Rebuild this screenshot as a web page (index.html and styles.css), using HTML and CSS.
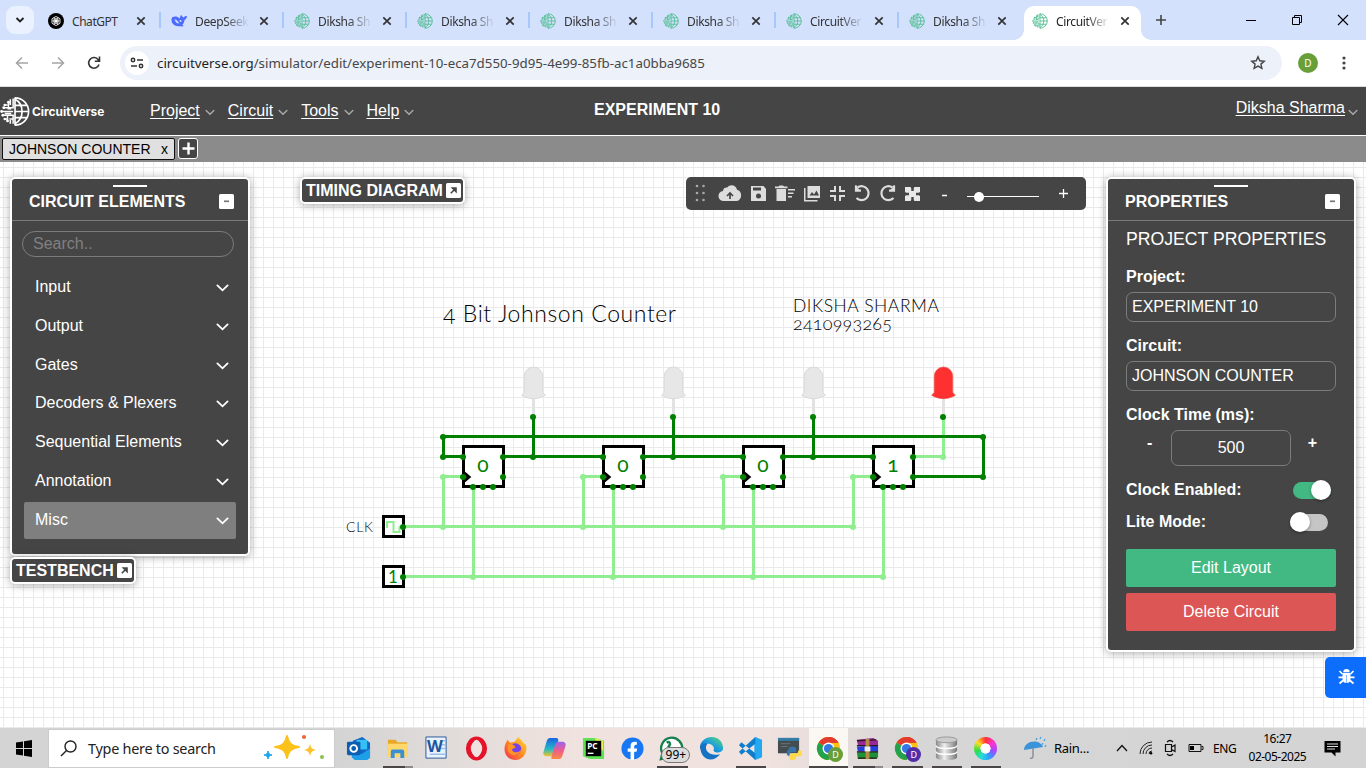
FILE: index.html
```html
<!DOCTYPE html>
<html lang="en">
<head>
<meta charset="utf-8">
<title>CircuitVerse</title>
<link rel="stylesheet" href="styles.css">
</head>
<body>
<svg class="defs" width="0" height="0">
  <defs>
    <symbol id="globe" viewBox="0 0 32 32">
      <g fill="none" stroke="currentColor" stroke-width="1.8">
        <path d="M16 1.5A14.5 14.5 0 0 1 16 30.500M16 1v30M16 3c10 5 10 21 0 26M16 9.500h13M16 16h15M16 22.500h13"/>
        <path d="M14 2v10H9V6M14 16H1.500M14 29v-9H8v6M14 24h-4M4 12h6M3 20h5M5 9h3M5 24h3M11 3v6M11 29v-4M12 13H8M12 18H5" stroke-width="1.600"/>
      </g>
      <g fill="currentColor"><circle cx="1.700" cy="16" r="1.500"/><circle cx="4" cy="12" r="1.500"/><circle cx="3" cy="20" r="1.500"/><circle cx="9" cy="6" r="1.500"/><circle cx="8" cy="26" r="1.500"/><circle cx="5" cy="9" r="1.300"/><circle cx="5" cy="24" r="1.300"/></g>
    </symbol>
    <symbol id="close" viewBox="0 0 10 10"><path d="M1.300 1.300l7.400 7.400M8.700 1.300L1.300 8.700" stroke="currentColor" stroke-width="1.700"/></symbol>
    <symbol id="chev" viewBox="0 0 14 10"><path d="M1.500 2.200L7 7.500l5.500-5.300" fill="none" stroke="currentColor" stroke-width="2" stroke-linecap="round"/></symbol>
    <symbol id="minus" viewBox="0 0 15 15"><rect width="15" height="15" rx="1.500" fill="#fff"/><path d="M5 7.300h5" stroke="#777" stroke-width="1.700"/></symbol>
    <symbol id="expand" viewBox="0 0 15 15"><rect width="15" height="15" rx="1.500" fill="#fff"/><path d="M4.800 10.200l3.500-3.500M6.500 5H10v3.500z" fill="#454545" stroke="#454545" stroke-width="1.600"/></symbol>
    <symbol id="led" viewBox="0 0 26 34"><path d="M3.800 26.500V10.200a9.200 9.200 0 0 1 18.400 0V26.500l2.700 2.700C18 33.800 8 33.800 1.100 29.200z"/></symbol>
    <symbol id="ff" viewBox="0 0 50 50">
      <rect x="4.500" y="4.500" width="40" height="40" fill="#fff" stroke="#000" stroke-width="3"/>
      <path d="M4 30l6 5-6 5" fill="none" stroke="#000" stroke-width="3"/>
      <g fill="green"><circle cx="4" cy="15" r="3"/><circle cx="4" cy="35" r="3"/><circle cx="44" cy="15" r="3"/><circle cx="44" cy="35" r="3"/><circle cx="14" cy="45" r="3"/><circle cx="24" cy="45" r="3"/><circle cx="34" cy="45" r="3"/></g>
    </symbol>
    <symbol id="chrome" viewBox="0 0 26 26">
      <circle cx="13" cy="13" r="12" fill="#fbc116"/>
      <path d="M13 13L2.600 7A12 12 0 0 1 23.400 7z" fill="#e33b2e"/>
      <path d="M13 13L2.600 7A12 12 0 0 0 13 25l5-9z" fill="#22a24c"/>
      <path d="M13 7h10.400L18 14z" fill="#fbc116"/><path d="M13 1a12 12 0 0 1 10.400 6H13z" fill="#e33b2e"/>
      <circle cx="13" cy="13" r="6.200" fill="#fff"/><circle cx="13" cy="13" r="4.800" fill="#3478e5"/>
    </symbol>
    <pattern id="grid" x="3" y="5" width="10" height="10" patternUnits="userSpaceOnUse"><path d="M.5 0V10M0 .5H10" stroke="#eaeaea"/></pattern>
    <linearGradient id="edgeG" x1="0" y1="1" x2="1" y2="0"><stop offset="0" stop-color="#0c59a4"/><stop offset=".5" stop-color="#1b9de2"/><stop offset="1" stop-color="#5fdc6a"/></linearGradient>
    <linearGradient id="cop1" x1="0" y1="0" x2="0" y2="1"><stop offset="0" stop-color="#1b62e0"/><stop offset=".6" stop-color="#22b8c8"/><stop offset="1" stop-color="#f0c62a"/></linearGradient>
    <linearGradient id="cop2" x1="0" y1="0" x2="0" y2="1"><stop offset="0" stop-color="#9a63ee"/><stop offset=".5" stop-color="#ef5b8d"/><stop offset="1" stop-color="#f98b45"/></linearGradient>
    <linearGradient id="fox" x1="1" y1="0" x2="0" y2="1"><stop offset="0" stop-color="#ffe03a"/><stop offset=".5" stop-color="#ff8a1f"/><stop offset="1" stop-color="#f02a5b"/></linearGradient>
    <linearGradient id="metal"><stop offset="0" stop-color="#888"/><stop offset=".4" stop-color="#eee"/><stop offset="1" stop-color="#777"/></linearGradient>
  </defs>
</svg>

<div class="tabstrip">
  <button class="tabsearch"><svg width="10" height="8" viewBox="0 0 10 8"><path d="M1.500 2L5 5.500 8.500 2" fill="none" stroke="#222" stroke-width="1.900"/></svg></button>
  <div class="btabs">
    <div class="btab"><svg class="fav" viewBox="0 0 16 16"><circle cx="8" cy="8" r="8" fill="#000"/><g fill="none" stroke="#fff" stroke-width=".8"><ellipse cx="8" cy="5.800" rx="2" ry="2.300"/><ellipse cx="8" cy="5.800" rx="2" ry="2.300" transform="rotate(60 8 8)"/><ellipse cx="8" cy="5.800" rx="2" ry="2.300" transform="rotate(120 8 8)"/><ellipse cx="8" cy="5.800" rx="2" ry="2.300" transform="rotate(180 8 8)"/><ellipse cx="8" cy="5.800" rx="2" ry="2.300" transform="rotate(240 8 8)"/><ellipse cx="8" cy="5.800" rx="2" ry="2.300" transform="rotate(300 8 8)"/></g></svg><span class="tt plain">ChatGPT</span><svg class="x"><use href="#close"/></svg></div>
    <div class="btab"><svg class="fav" viewBox="0 0 16 16"><path d="M.5 6C1 3.500 4 3 6.500 4L9 5.500C9 3.500 9.500 2 10.500 2c.3 1.300 1 2.200 2.200 2.400C13.500 3.500 14.500 3 16 3c-.2 2-1 3.300-2.400 3.800-.2 2.200-1.100 3.800-2.300 5l1.500 1.300c-1.500.8-2.700.5-3.800-.1C4.500 14 0 11 .5 6z" fill="#4d6bfe"/><path d="M3.500 6.500c2-.3 3.500 2 4.700 4-1.800.3-3.700-1-4.700-4z" fill="#d3e1fd"/><circle cx="9.500" cy="8" r="1" fill="#d3e1fd"/></svg><span class="tt">DeepSeek</span><svg class="x"><use href="#close"/></svg></div>
    <div class="btab"><svg class="fav cv"><use href="#globe"/></svg><span class="tt">Diksha Sh</span><svg class="x"><use href="#close"/></svg></div>
    <div class="btab"><svg class="fav cv"><use href="#globe"/></svg><span class="tt">Diksha Sh</span><svg class="x"><use href="#close"/></svg></div>
    <div class="btab"><svg class="fav cv"><use href="#globe"/></svg><span class="tt">Diksha Sh</span><svg class="x"><use href="#close"/></svg></div>
    <div class="btab"><svg class="fav cv"><use href="#globe"/></svg><span class="tt">Diksha Sh</span><svg class="x"><use href="#close"/></svg></div>
    <div class="btab"><svg class="fav cv"><use href="#globe"/></svg><span class="tt">CircuitVer</span><svg class="x"><use href="#close"/></svg></div>
    <div class="btab last"><svg class="fav cv"><use href="#globe"/></svg><span class="tt">Diksha Sh</span><svg class="x"><use href="#close"/></svg></div>
    <div class="btab active"><svg class="fav cv"><use href="#globe"/></svg><span class="tt">CircuitVer</span><svg class="x"><use href="#close"/></svg></div>
  </div>
  <svg class="newtab" width="12" height="12"><path d="M6 1v10M1 6h10" stroke="#444" stroke-width="1.600"/></svg>
  <div class="winctl">
    <svg width="12" height="12"><path d="M1 6.500h10" stroke="#000"/></svg>
    <svg width="12" height="12"><path d="M1.500 3.500h7v7h-7zM3.500 3V1.500h7v7H9" fill="none" stroke="#000"/></svg>
    <svg width="12" height="12"><path d="M1 1l10 10M11 1L1 11" stroke="#000" stroke-width="1.100"/></svg>
  </div>
</div>

<div class="addrbar">
  <div class="navbtns">
    <svg width="14" height="14"><path d="M13 7H2M7 1.500L1.500 7 7 12.500" fill="none" stroke="#a5a5a5" stroke-width="1.500"/></svg>
    <svg width="14" height="14"><path d="M1 7h11M7 1.500L12.500 7 7 12.500" fill="none" stroke="#a5a5a5" stroke-width="1.500"/></svg>
    <svg width="14" height="14"><path d="M12 8.500A5.300 5.300 0 1 1 10.800 3.200L12.300 5M12.500 .5V5.200H7.800" fill="none" stroke="#333" stroke-width="1.600"/></svg>
  </div>
  <div class="omni">
    <span class="site"><svg width="14" height="12" viewBox="0 0 14 12"><g fill="none" stroke="#333" stroke-width="1.500"><circle cx="3" cy="3" r="1.700"/><path d="M7 3h6M1 9h6"/><circle cx="11" cy="9" r="1.700"/></g></svg></span>
    <span class="url"><b>circuitverse.org</b>/simulator/edit/experiment-10-eca7d550-9d95-4e99-85fb-ac1a0bba9685</span>
    <svg class="star" width="16" height="16" viewBox="0 0 16 16"><path d="M8 1.800l1.800 4 4.400.4-3.300 2.900 1 4.300L8 11.100l-3.900 2.300 1-4.300L1.800 6.200l4.400-.4z" fill="none" stroke="#444" stroke-width="1.400"/></svg>
  </div>
  <span class="avatar">D</span>
  <svg class="dots" width="4" height="16"><g fill="#444"><circle cx="2" cy="3" r="1.600"/><circle cx="2" cy="8" r="1.600"/><circle cx="2" cy="13" r="1.600"/></g></svg>
</div>

<header class="cvhead">
  <svg class="logo"><use href="#globe"/></svg><span class="brand">CircuitVerse</span>
  <nav>
    <a>Project</a><svg class="nc"><use href="#chev"/></svg>
    <a>Circuit</a><svg class="nc"><use href="#chev"/></svg>
    <a>Tools</a><svg class="nc"><use href="#chev"/></svg>
    <a>Help</a><svg class="nc"><use href="#chev"/></svg>
  </nav>
  <span class="ptitle">EXPERIMENT 10</span>
  <div class="user"><a>Diksha Sharma</a><svg class="nc"><use href="#chev"/></svg></div>
</header>
<div class="ctabs"><div class="ctab"><span>JOHNSON COUNTER</span><span>x</span></div><div class="cadd"><svg width="13" height="13"><path d="M6.500 .5v12M.5 6.500h12" stroke="#fff" stroke-width="2.400"/></svg></div></div>

<main class="stage">
  <svg class="board" width="1366" height="566" viewBox="0 162 1366 566">
    <g transform="translate(0 162)"><rect width="1366" height="566" fill="url(#grid)"/></g>
    <g class="label"><text x="443" y="322" font-size="23" textLength="233">4 Bit Johnson Counter</text>
    <text x="793" y="312" font-size="17.500" textLength="146">DIKSHA SHARMA</text>
    <text x="793" y="330" font-size="18" textLength="99">2410993265</text>
    <text x="346" y="532" font-size="14" textLength="27">CLK</text></g>
    <g stroke="#e2e2e4" stroke-width="3"><path d="M533.500 398v18M673.500 398v18M813.500 398v18M943.500 398v18"/></g>
    <g fill="#e7e7e7" stroke="#d9d9dc"><use href="#led" x="520.500" y="366" width="26" height="34"/><use href="#led" x="660.500" y="366" width="26" height="34"/><use href="#led" x="800.500" y="366" width="26" height="34"/></g>
    <use href="#led" x="930.500" y="366" width="26" height="34" fill="#ff3030" stroke="#f04848" stroke-width=".6"/>
    <g fill="none" stroke="lightgreen" stroke-width="3">
      <path d="M403 526.500H853.500V476.500H873M443.500 526.500V476.500H463M583.500 526.500V476.500H603M723.500 526.500V476.500H743M403 576.500H883.500V487M473.500 487V576.500M613.500 487V576.500M753.500 487V576.500M913 456.500H943.500V417"/>
    </g>
    <g fill="lightgreen"><circle cx="443" cy="477" r="3"/><circle cx="583" cy="477" r="3"/><circle cx="723" cy="477" r="3"/><circle cx="853" cy="477" r="3"/><circle cx="443" cy="527" r="3"/><circle cx="583" cy="527" r="3"/><circle cx="723" cy="527" r="3"/><circle cx="853" cy="527" r="3"/><circle cx="473" cy="577" r="3"/><circle cx="613" cy="577" r="3"/><circle cx="753" cy="577" r="3"/><circle cx="883" cy="577" r="3"/><circle cx="943" cy="457" r="3"/></g>
    <path d="M463 456.500H443.500V436.500H983.500V476.500H913M503 456.500H603M643 456.500H743M783 456.500H873M533.500 456V417M673.500 456V417M813.500 456V417" fill="none" stroke="green" stroke-width="3"/>
    <g fill="green"><circle cx="443" cy="437" r="3"/><circle cx="443" cy="457" r="3"/><circle cx="983" cy="437" r="3"/><circle cx="983" cy="477" r="3"/><circle cx="533" cy="417" r="3"/><circle cx="673" cy="417" r="3"/><circle cx="813" cy="417" r="3"/><circle cx="943" cy="417" r="3"/><circle cx="533" cy="457" r="3"/><circle cx="673" cy="457" r="3"/><circle cx="813" cy="457" r="3"/></g>
    <use href="#ff" x="459" y="442" width="50" height="50"/><use href="#ff" x="599" y="442" width="50" height="50"/><use href="#ff" x="739" y="442" width="50" height="50"/><use href="#ff" x="869" y="442" width="50" height="50"/>
    <g fill="#fff" stroke="#000" stroke-width="3"><rect x="383.500" y="516.500" width="20" height="20"/><rect x="383.500" y="566.500" width="20" height="20"/></g>
    <path d="M387 528v-6h6.500v10h6v-6" fill="none" stroke="lightgreen" stroke-width="2"/>
    <g fill="green"><circle cx="403" cy="527" r="3"/><circle cx="403" cy="577" r="3"/></g>
    <g class="val"><text x="483" y="472">0</text><text x="623" y="472">0</text><text x="763" y="472">0</text><text x="893" y="472">1</text><text x="393" y="582.500" class="lit">1</text></g>
  </svg>

  <section class="panel elements">
    <div class="grip"></div>
    <div class="phead"><span>CIRCUIT ELEMENTS</span><svg width="15" height="15"><use href="#minus"/></svg></div>
    <div class="search">Search..</div>
    <ul class="menu">
      <li>Input<svg><use href="#chev"/></svg></li>
      <li>Output<svg><use href="#chev"/></svg></li>
      <li>Gates<svg><use href="#chev"/></svg></li>
      <li>Decoders &amp; Plexers<svg><use href="#chev"/></svg></li>
      <li>Sequential Elements<svg><use href="#chev"/></svg></li>
      <li>Annotation<svg><use href="#chev"/></svg></li>
      <li class="hover">Misc<svg><use href="#chev"/></svg></li>
    </ul>
  </section>
  <div class="panel mini timing">TIMING DIAGRAM<svg width="15" height="15"><use href="#expand"/></svg></div>
  <div class="panel mini bench">TESTBENCH<svg width="15" height="15"><use href="#expand"/></svg></div>

  <div class="tools">
    <svg width="400" height="33" viewBox="0 0 400 33">
      <g fill="#a9a9a9"><circle cx="11" cy="9" r="1.300"/><circle cx="17.500" cy="9" r="1.300"/><circle cx="11" cy="16" r="1.300"/><circle cx="17.500" cy="16" r="1.300"/><circle cx="11" cy="23" r="1.300"/><circle cx="17.500" cy="23" r="1.300"/></g>
      <g fill="#ddd">
        <path d="M38 24a5 5 0 0 1-1-10c0-3 3-4 4.200-3.500 3-3.800 9-2.500 9.800 2.300 5.500 1 5.500 10 .2 11.200z"/>
        <path d="M66.500 9h11l2.500 3V24H65V9z"/>
        <path d="M90.500 12h9.500v12h-9.500zM89 9.500h3.500l1-1h3.500l1 1h3.500v1.700H89zM102 12h7v1.500h-7zM102 15.500h5.500V17H102zM102 19h4v1.500h-4z"/>
        <path d="M121.500 9H134v12h-12.500zM119.500 11v12h12v1.500H118V11z"/>
      </g>
      <path d="M44 22v-5.500M41 19l3-3 3 3" fill="none" stroke="#454545" stroke-width="1.700"/>
      <path d="M67 10.500h8v3h-8z" fill="#454545"/><circle cx="72.500" cy="19" r="2.500" fill="#454545"/>
      <path d="M123.500 18.500l2.500-3.500 2 2.500 2.500-4 2.500 5z" fill="#454545"/>
      <path d="M144 14h5V9M159 14h-5V9M144 19h5v5M159 19h-5v5" fill="none" stroke="#ddd" stroke-width="2"/>
      <g fill="none" stroke="#ddd" stroke-width="2.200"><path d="M171.500 10.500A7 7 0 1 1 170.500 21M170 8.500v5h5"/><path d="M206.500 10.500A7 7 0 1 0 207.500 21M208 8.500v5h-5"/></g><path d="M169 8v6.500h6zM209 8v6.500h-6z" fill="#ddd"/>
      <path d="M219 10h15v14h-15z" fill="#e8e8e8"/><path d="M224.500 10h4l-2 2.500zM224.500 24h4l-2-2.500zM219 15v4l2.500-2zM234 15v4l-2.500-2zM222.500 12.500l3 3M230.500 12.500l-3 3M222.500 21.500l3-3M230.500 21.500l-3-3" fill="#454545"/><path d="M226.500 10v4M226.500 20v4M219 17h4M230 17h4" stroke="#454545" stroke-width="2.400"/>
      <path d="M256 18.500h5M373 16.500h9M377.500 12v9" stroke="#fff" stroke-width="1.300"/>
      <path d="M281 19.500h72" stroke="#fff"/><circle cx="293" cy="20" r="5" fill="#fff"/>
    </svg>
  </div>

  <section class="panel props">
    <div class="grip"></div>
    <div class="phead"><span>PROPERTIES</span><svg width="15" height="15"><use href="#minus"/></svg></div>
    <div class="pbody">
      <h2>PROJECT PROPERTIES</h2>
      <label>Project:</label><div class="inp">EXPERIMENT 10</div>
      <label>Circuit:</label><div class="inp">JOHNSON COUNTER</div>
      <label class="ck">Clock Time (ms):</label>
      <div class="clock"><b>-</b><div class="num">500</div><b>+</b></div>
      <div class="row r1"><b>Clock Enabled:</b><span class="sw on"></span></div>
      <div class="row r2"><b>Lite Mode:</b><span class="sw"></span></div>
      <div class="btn green">Edit Layout</div>
      <div class="btn red">Delete Circuit</div>
    </div>
  </section>
  <div class="bug"><svg width="17" height="17" viewBox="0 0 17 17"><path d="M5.300 4.200a3.200 3.200 0 0 1 6.400 0z" fill="#fff"/><path d="M4.500 5h8v6a4 4 0 0 1-8 0z" fill="#fff"/><path d="M1.500 3l3 3M15.500 3l-3 3M.5 9.300h16M1.500 15.500l3.500-3M15.500 15.500l-3.500-3" stroke="#fff" stroke-width="1.700"/><path d="M8.500 7v8" stroke="#8ab9ff"/></svg></div>
</main>

<footer class="taskbar">
  <div class="start"><svg width="16" height="17"><path d="M0 2.500L7 1.500V8H0zM8 1.300L16 0v8H8zM0 9h7v6.500L0 14.500zM8 9h8v8l-8-1.300z"/></svg></div>
  <div class="tsearch"><svg width="17" height="17"><circle cx="10.500" cy="6.500" r="5.500" fill="none" stroke="#222" stroke-width="1.400"/><path d="M6.500 10.500L1 16" stroke="#222" stroke-width="1.400"/></svg><span>Type here to search</span>
    <svg class="spark" width="62" height="28" viewBox="0 0 62 28"><path d="M24 2c1.500 7 4 9.500 12 11-8 1.500-10.500 4-12 11-1.500-7-4-9.500-12-11 8-1.500 10.500-4 12-11z" fill="#fcc21b" stroke="#fcc21b" stroke-width="1.800" stroke-linejoin="round"/><path d="M47 10c1 4 2 5 6 6-4 1-5 2-6 6-1-4-2-5-6-6 4-1 5-2 6-6z" fill="#fbc22d"/><path d="M5 17c.7 2.800 1.200 3.300 4 4-2.800.7-3.300 1.200-4 4-.7-2.800-1.200-3.300-4-4 2.800-.7 3.300-1.200 4-4z" fill="#16a3f0" stroke="#16a3f0"/><circle cx="41" cy="3" r="2" fill="#ef6330"/><circle cx="59" cy="23" r="2" fill="#8bc34a"/></svg></div>
  <div class="apps">
    <div><svg viewBox="0 0 26 26"><path d="M7 5L17 1l8 6v16H7z" fill="#1267c4"/><path d="M11 4h11v10H11z" fill="#34c0f4"/><path d="M6 14l10 5 9-6v10l-3 2H9l-3-3z" fill="#1d9ee8"/><rect x="1" y="6" width="14" height="14" rx="1.500" fill="#0a5fb4"/><circle cx="8" cy="13" r="3.500" fill="none" stroke="#fff" stroke-width="2"/></svg></div>
    <div class="run split"><svg viewBox="0 0 26 26"><path d="M3 4h8l2 2.500h10V21H3z" fill="#e8a727"/><path d="M3 8h20v14H3z" fill="#ffd76b"/><path d="M6 23v-7q0-2 2-2h10q2 0 2 2v7h-4v-5h-6v5z" fill="#3b90d4"/></svg></div>
    <div><svg viewBox="0 0 26 26"><path d="M2 1h21v22H2z" fill="#e9f2fb" stroke="#2a579a"/><path d="M17 5h5M17 9h5M15 13h7M6 19h16" stroke="#9fc0e4" stroke-width="1.500"/><text x="3" y="17" font-size="17" font-weight="700" fill="#1d55a0">W</text></svg></div>
    <div><svg viewBox="0 0 26 26"><ellipse cx="13" cy="13" rx="8.500" ry="10" fill="none" stroke="#e5122a" stroke-width="5"/><ellipse cx="13" cy="13" rx="5" ry="9" fill="#efe2df"/></svg></div>
    <div><svg viewBox="0 0 26 26"><path d="M2 10c1-3 2-5 3-6l2 3 5-1 4-5c2 3 4 3 5 6l3 2c2 8-3 16-11 16S0 18 2 10z" fill="url(#fox)"/><circle cx="13" cy="13.500" r="6" fill="#7542e5"/><path d="M5 9c4-1 7 0 8 3l-4 2c2 4 7 4 10 0-1 7-13 8-14 0z" fill="#ff9426"/></svg></div>
    <div><svg viewBox="0 0 26 26"><path d="M8 2h7q2 0 2 3l-4 14q-1 2-4 2H4q-4-1-2-6L5 5q1-3 3-3z" fill="url(#cop1)"/><path d="M18 6h4q4 1 2 6l-3 9q-1 3-4 3h-6q-2 0-1-3l4-13q1-2 4-2z" fill="url(#cop2)"/></svg></div>
    <div><svg viewBox="0 0 26 26"><path d="M2 2h13l9 3v19H9l-7-3z" fill="#5fe356"/><path d="M14 2l9 3v11z" fill="#e9f25b"/><rect x="5" y="5" width="16" height="16" fill="#000"/><text x="6.500" y="13.500" font-size="8.500" font-weight="700" fill="#fff">PC</text><path d="M7 18h6" stroke="#fff" stroke-width="1.400"/></svg></div>
    <div><svg viewBox="0 0 26 26"><circle cx="13" cy="13" r="11.500" fill="#1877f2"/><path d="M11 25v-8.500H8V13h3v-2.500C11 7 13 5.500 17.500 6.200v3C15 9 14.700 9.700 14.700 13h3.100l-.6 3.500h-2.500V25z" fill="#fff"/></svg></div>
    <div class="run wa"><svg viewBox="0 0 26 26"><path d="M2 24l1.500-6A11 11 0 1 1 8 22.500z" fill="#fff" stroke="#15804b" stroke-width="2.400"/><path d="M8 7q3-2 3.500 1.500L10 11l4 4" fill="none" stroke="#15804b" stroke-width="2.500"/></svg><span>99+</span></div>
    <div><svg viewBox="0 0 26 26"><path d="M25 14c-2 4-8 4-10 1 2-4-2-7-6-7-5 0-8 4-7.500 7C-1 7 6 1 13 1c8 0 12 6 12 11z" fill="url(#edgeG)"/><path d="M1.500 13C1 9 5 7 9 8c-4 3-2 14 13 11-8 10-20 5-20.500-6z" fill="#1673c4"/></svg></div>
    <div class="run"><svg viewBox="0 0 26 26"><path d="M18 1l7 3v18l-7 3-1-1V2z" fill="#23a8f2"/><path d="M18 1L1 16.500l2.500 3L18 8zM18 25L1 9.500l2.500-3L18 18z" fill="#0d7dcc"/></svg></div>
    <div><svg viewBox="0 0 26 26"><path d="M1 2h22v16H1z" fill="#454c50"/><path d="M1 2h22v3H1z" fill="#347eaa"/><path d="M4 8h10M4 11h7" stroke="#6b767a"/><path d="M12 14q0-3 4-3t4 3v3h-5q-2 0-2 4-3 0-3-4 0-2 2-2.500z" fill="#3775ab"/><path d="M25 15q2 6-2 6h-3v1q0 3-4 3t-3-3q0-4 3-4h4q2 0 2-3z" fill="#ffd94c"/></svg></div>
    <div class="run act"><svg viewBox="0 0 26 26"><use href="#chrome"/></svg><i class="g">D</i></div>
    <div class="run split"><svg viewBox="0 0 26 26"><path d="M2 4l17-2 5 3v5H3z" fill="#9b2799"/><path d="M2 11l22-1v6H3z" fill="#263ee0"/><path d="M2 17l22-1v6l-4 2H3z" fill="#1d9136"/><path d="M2 10h22M2 16.500h22M2 5l20-1M3 23h20" stroke="#2b1b1b" stroke-width="1.500"/><path d="M11 3h4v21h-4z" fill="#b88b45"/><path d="M10 11h6v5h-6z" fill="#eee"/></svg></div>
    <div class="run"><svg viewBox="0 0 26 26"><use href="#chrome"/></svg><i class="p">D</i></div>
    <div class="run"><svg viewBox="0 0 26 26"><path d="M2 4v18c0 4 22 4 22 0V4z" fill="url(#metal)"/><ellipse cx="13" cy="4" rx="11" ry="3" fill="#ccc" stroke="#999"/><path d="M2 10c0 4 22 4 22 0M2 16c0 4 22 4 22 0" fill="none" stroke="#fff" stroke-width="1.500"/></svg></div>
    <div class="run"><span class="wheel"></span></div>
  </div>
  <div class="weather"><svg width="24" height="24" viewBox="0 0 24 24"><path d="M1 14C1 5 16 2 20 11z" fill="#3b93d9"/><path d="M10 12v8q0 3-3 2" fill="none" stroke="#8a8f96" stroke-width="1.500"/><path d="M14 2l-1 2M18 1l-1 2M22 3l-1 2M20 7l-1 2M23 9l-1 2" stroke="#4aa3df" stroke-width="1.300"/></svg><span>Rain...</span></div>
  <div class="tray">
    <svg width="12" height="8"><path d="M1 7l5-5.500L11 7" fill="none" stroke="#111" stroke-width="1.300"/></svg>
    <svg width="14" height="14" viewBox="0 0 14 14"><g fill="none" stroke="#222"><path d="M1 13A12 12 0 0 1 13 1M4 13a9 9 0 0 1 9-9M7 13a6 6 0 0 1 6-6M10 13a3 3 0 0 1 3-3"/></g><circle cx="12" cy="12.300" r="1.300"/></svg>
    <svg width="13" height="18" viewBox="0 0 13 18"><path d="M1.500 5.500h6v7h-6zM7.500 8l3.500-2v6.500l-3.500-2M3 3q3-3 6 0M3 15q3 3 6 0" fill="none" stroke="#111" stroke-width="1.200"/></svg>
    <svg width="16" height="10"><path d="M1 1.500h12v7H1zM13.500 3.500h1.500v3h-1.500" fill="none" stroke="#111"/><path d="M2 3h4v4H2z"/></svg>
    <span class="eng">ENG</span>
  </div>
  <div class="time"><span>16:27</span><span>02-05-2025</span></div>
  <svg class="notif" width="17" height="17"><path d="M.5 1h16v11.500h-5v4l-4-4h-7z"/><path d="M3 4h11M3 6.500h11M3 9h8" stroke="#ddd"/></svg>
</footer>
</body>
</html>
```
FILE: styles.css
```css
* { box-sizing: border-box; }
body { margin: 0; width: 1366px; height: 768px; overflow: hidden; display: flex; flex-direction: column; font-family: "Liberation Sans", Arial, sans-serif; font-size: 16px; background: #fff; }
.defs { position: absolute; }
svg { display: block; flex: none; }

/* browser chrome */
.tabstrip { height: 40px; background: #d3e1fd; display: flex; align-items: center; font: 12px "Noto Sans", sans-serif; flex: none; }
.tabsearch { width: 28px; height: 28px; margin: 0 6px; border: 0; border-radius: 9px; background: #ebf1fe; display: grid; place-items: center; padding: 0; }
.btabs { display: flex; gap: 6px; align-self: stretch; align-items: flex-end; }
.btab { width: 117px; height: 34px; padding: 0 11px 4px 8px; display: flex; align-items: center; position: relative; color: #333; }
.btab::after { content: ""; position: absolute; right: -4px; top: 6px; width: 2px; height: 16px; background: #a8c7fa; }
.btab.last::after { display: none; }
.fav { width: 16px; height: 16px; margin: -1px 8px 0 0; }
.fav.cv { color: #53bd93; }
.tt { width: 54px; overflow: hidden; white-space: nowrap; letter-spacing: -.35px; margin-right: auto; padding-top: 1px; mask-image: linear-gradient(90deg, #000 55%, transparent 100%); }
.tt.plain { mask-image: none; letter-spacing: -.45px; }
.x { width: 10px; height: 10px; color: #333; }
.btab.active { background: #fff; border-radius: 10px 10px 0 0; color: #222; }
.btab.active::before, .btab.active::after { content: ""; position: absolute; background: radial-gradient(circle at 0 0, transparent 9.5px, #fff 10px); width: 10px; height: 10px; top: auto; bottom: 0; left: -10px; }
.btab.active::after { left: auto; right: -10px; background: radial-gradient(circle at 100% 0, transparent 9.5px, #fff 10px); }
.newtab { margin-left: 14px; }
.winctl { margin-left: auto; display: flex; gap: 34px; padding-right: 17px; }
.addrbar { height: 47px; flex: none; border-bottom: 1px solid #ddd; display: flex; align-items: center; background: #fff; }
.navbtns { display: flex; gap: 22px; padding: 0 19px 0 15px; }
.omni { width: 1162px; height: 34px; border-radius: 17px; background: #ecf1fa; display: flex; align-items: center; padding: 0 16px 0 5px; }
.site { width: 24px; height: 24px; border-radius: 50%; background: #fff; display: grid; place-items: center; margin-right: 8px; }
.url { font: 13.300px "Noto Sans", sans-serif; color: #474747; white-space: nowrap; }
.url b { font-weight: 400; color: #1f1f1f; }
.star { margin-left: auto; }
.avatar { width: 20px; height: 20px; border-radius: 50%; background: #689f38; color: #fff; font: 10px/20px "Noto Sans", sans-serif; text-align: center; margin-left: 16px; }
.dots { margin-left: 24px; }

/* simulator header */
.cvhead { height: 49px; flex: none; background: #454545; border-bottom: 1px solid #fff; display: flex; align-items: center; color: #fff; }
.cvhead a { text-decoration: underline; text-underline-offset: 2px; }
.logo { width: 30px; height: 31px; }
.brand { font: 700 11.900px "Inter", sans-serif; margin-left: 2px; width: 118px; }
nav { display: flex; align-items: center; width: 444px; }
.nc { width: 10px; height: 7px; margin: 2px 13px 0 5px; color: #aaa; }
nav a:nth-of-type(3) + .nc { margin-right: 13px; }
.ptitle { font-weight: 700; margin-bottom: 2px; }
.user { display: flex; align-items: center; margin: -6px 8px 0 auto; }
.user .nc { margin: 8px 0 0 3px; }
.ctabs { height: 26px; flex: none; background: #8b8b8b; display: flex; padding: 2px; gap: 3px; font-size: 14px; }
.ctab { width: 173px; height: 22px; border: 1px solid #111; border-radius: 2px; background: #e0e0e0; display: flex; justify-content: space-between; align-items: center; padding: 0 6px; }
.cadd { width: 20px; height: 21px; border: 1px solid #fff; border-radius: 3px; background: #454545; display: grid; place-items: center start; padding-left: 2.500px; }

/* canvas with floating panels */
.stage { flex: none; height: 566px; position: relative; overflow: hidden; }
.label { font-family: Lato, sans-serif; font-weight: 300; font-variant-numeric: oldstyle-nums; fill: #000; }
.val { font-family: Lato, sans-serif; font-size: 21px; font-variant-numeric: oldstyle-nums; fill: green; text-anchor: middle; }
.val .lit { font-size: 17px; font-variant-numeric: lining-nums; }
.panel { position: absolute; background: #454545; border: 2px solid #fff; border-radius: 5px; color: #fff; box-shadow: 0 1px 9px rgba(0,0,0,.35); }
.elements { left: 10px; top: 15px; width: 240px; height: 379px; }
.props { left: 1106px; top: 15px; width: 250px; height: 475px; }
.grip { width: 34px; height: 2px; background: #fff; margin: 6px auto 0; }
.phead { height: 34px; border-bottom: 1px solid #7a7a7a; display: flex; justify-content: space-between; align-items: center; padding: 0 14px 4px 17px; font-weight: 700; }
.search { margin: 10px 14px 0 10px; height: 26px; border: 1px solid #7c7c7c; border-radius: 13px; padding-left: 10px; line-height: 24px; color: #808080; }
.menu { list-style: none; margin: 12px 12px 0; padding: 0; display: grid; gap: 1.830px; }
.menu li { height: 37px; padding: 0 7px 1.300px 11px; display: flex; justify-content: space-between; align-items: center; border-radius: 2px; }
.menu svg { width: 13px; height: 10px; margin-top: 2px; }
.menu .hover { background: #7f7f7f; }
.mini { height: 27px; display: flex; align-items: center; justify-content: space-between; font-weight: 700; padding: 1px 2px 0 4px; }
.mini svg { margin-top: -2px; }
.timing { left: 300px; top: 15px; width: 165px; }
.bench { left: 10px; top: 395px; width: 126px; }
.tools { position: absolute; left: 686px; top: 15px; width: 400px; height: 33px; border-radius: 5px; background: #454545; }
.pbody { padding: 8px 18px 0; }
.pbody h2 { font-size: 17.650px; font-weight: 400; margin: 0; line-height: 20px; }
.pbody label { display: block; font-weight: 700; line-height: 18px; margin: 19px 0 6px; }
.pbody .inp + label { margin-top: 15px; }
.inp { height: 30px; border: 1px solid #7c7c7c; border-radius: 7px; padding-left: 5px; line-height: 27px; }
.clock { display: flex; justify-content: space-between; padding: 0 19px 0 21px; line-height: 25px; }
.num { width: 120px; height: 36px; border: 1px solid #7c7c7c; border-radius: 7px; text-align: center; line-height: 34px; margin-left: 2px; }
.row { display: flex; justify-content: space-between; align-items: center; height: 20px; }
.r1 { margin-top: 14px; padding-right: 5px; }
.r2 { margin-top: 12px; padding-right: 8px; }
.sw { width: 38px; height: 17px; border-radius: 9px; background: #c5c5c5; position: relative; }
.sw::after { content: ""; position: absolute; width: 20px; height: 20px; border-radius: 50%; background: #fff; left: 0; top: -2px; box-shadow: 0 1px 3px rgba(0,0,0,.4); }
.sw.on { background: #42b983; }
.sw.on::after { left: auto; right: 0; }
.btn { height: 38px; border-radius: 2px; text-align: center; line-height: 37px; }
.green { background: #42b983; margin-top: 17px; }
.red { background: #dc5656; margin-top: 6px; }
.bug { position: absolute; right: 0; top: 495px; width: 41px; height: 41px; background: #0d6efd; border-radius: 5px 0 0 5px; display: grid; place-items: center; padding: 0 0 2px 1px; }

/* taskbar */
.taskbar { height: 40px; flex: none; background: linear-gradient(90deg, #d4d4d4 25%, #e1dcda 33%, #f0e2de 42%, #f0e2de 56%, #d6d6d6 68%, #d4d4d4); display: flex; align-items: center; font-family: "Noto Sans", sans-serif; }
.start { width: 48px; display: grid; place-items: center; }
.tsearch { width: 287px; height: 39px; background: #fff; border: 1px solid #ccc; display: flex; align-items: center; padding: 0 9px 0 11px; font-size: 14.400px; letter-spacing: -.25px; color: #222; }
.tsearch span { margin-left: 11px; white-space: nowrap; }
.spark { margin-left: auto; }
.apps { width: 666px; margin-left: 4px; align-self: stretch; display: flex; }
.apps div { flex: 1; display: flex; align-items: center; justify-content: center; position: relative; }
.apps svg { width: 25px; height: 25px; }
.apps .run::after { content: ""; position: absolute; bottom: 0; left: 5px; right: 4px; height: 2px; background: #4a4547; }
.apps .split::after { background: linear-gradient(90deg, #4a4547 75%, #8f8b8c 75%); }
.apps .act { background: #fbf8f4; }
.apps .act::after { left: 0; right: 0; }
.apps i { position: absolute; left: 19px; top: 19px; width: 15px; height: 15px; border-radius: 50%; color: #fff; font: 9px/15px "Noto Sans", sans-serif; text-align: center; }
.g { background: #689f38; }
.p { background: #512da8; }
.wa span { position: absolute; left: 9px; top: 19px; width: 29px; height: 16px; border: 1px solid #777; border-radius: 8px; background: #ddd; font-size: 12px; line-height: 14px; text-align: center; }
.wheel { width: 23px; height: 23px; border-radius: 50%; background: radial-gradient(circle, #fff 30%, transparent 33%), conic-gradient(#f33, #f3c, #a4f, #39f, #2dd, #3d4, #fd2, #f33); }
.weather { display: flex; align-items: center; gap: 7px; margin-left: 18px; font-size: 13px; letter-spacing: -.3px; width: 93px; }
.tray { display: flex; align-items: center; gap: 11px; font-size: 12px; }
.eng { letter-spacing: -.4px; margin-left: -2px; }
.time { display: flex; flex-direction: column; align-items: center; width: 62px; margin-left: 10px; font-size: 12px; line-height: 18px; letter-spacing: -.5px; white-space: nowrap; }
.notif { margin: 0 auto 0 16px; }
```
